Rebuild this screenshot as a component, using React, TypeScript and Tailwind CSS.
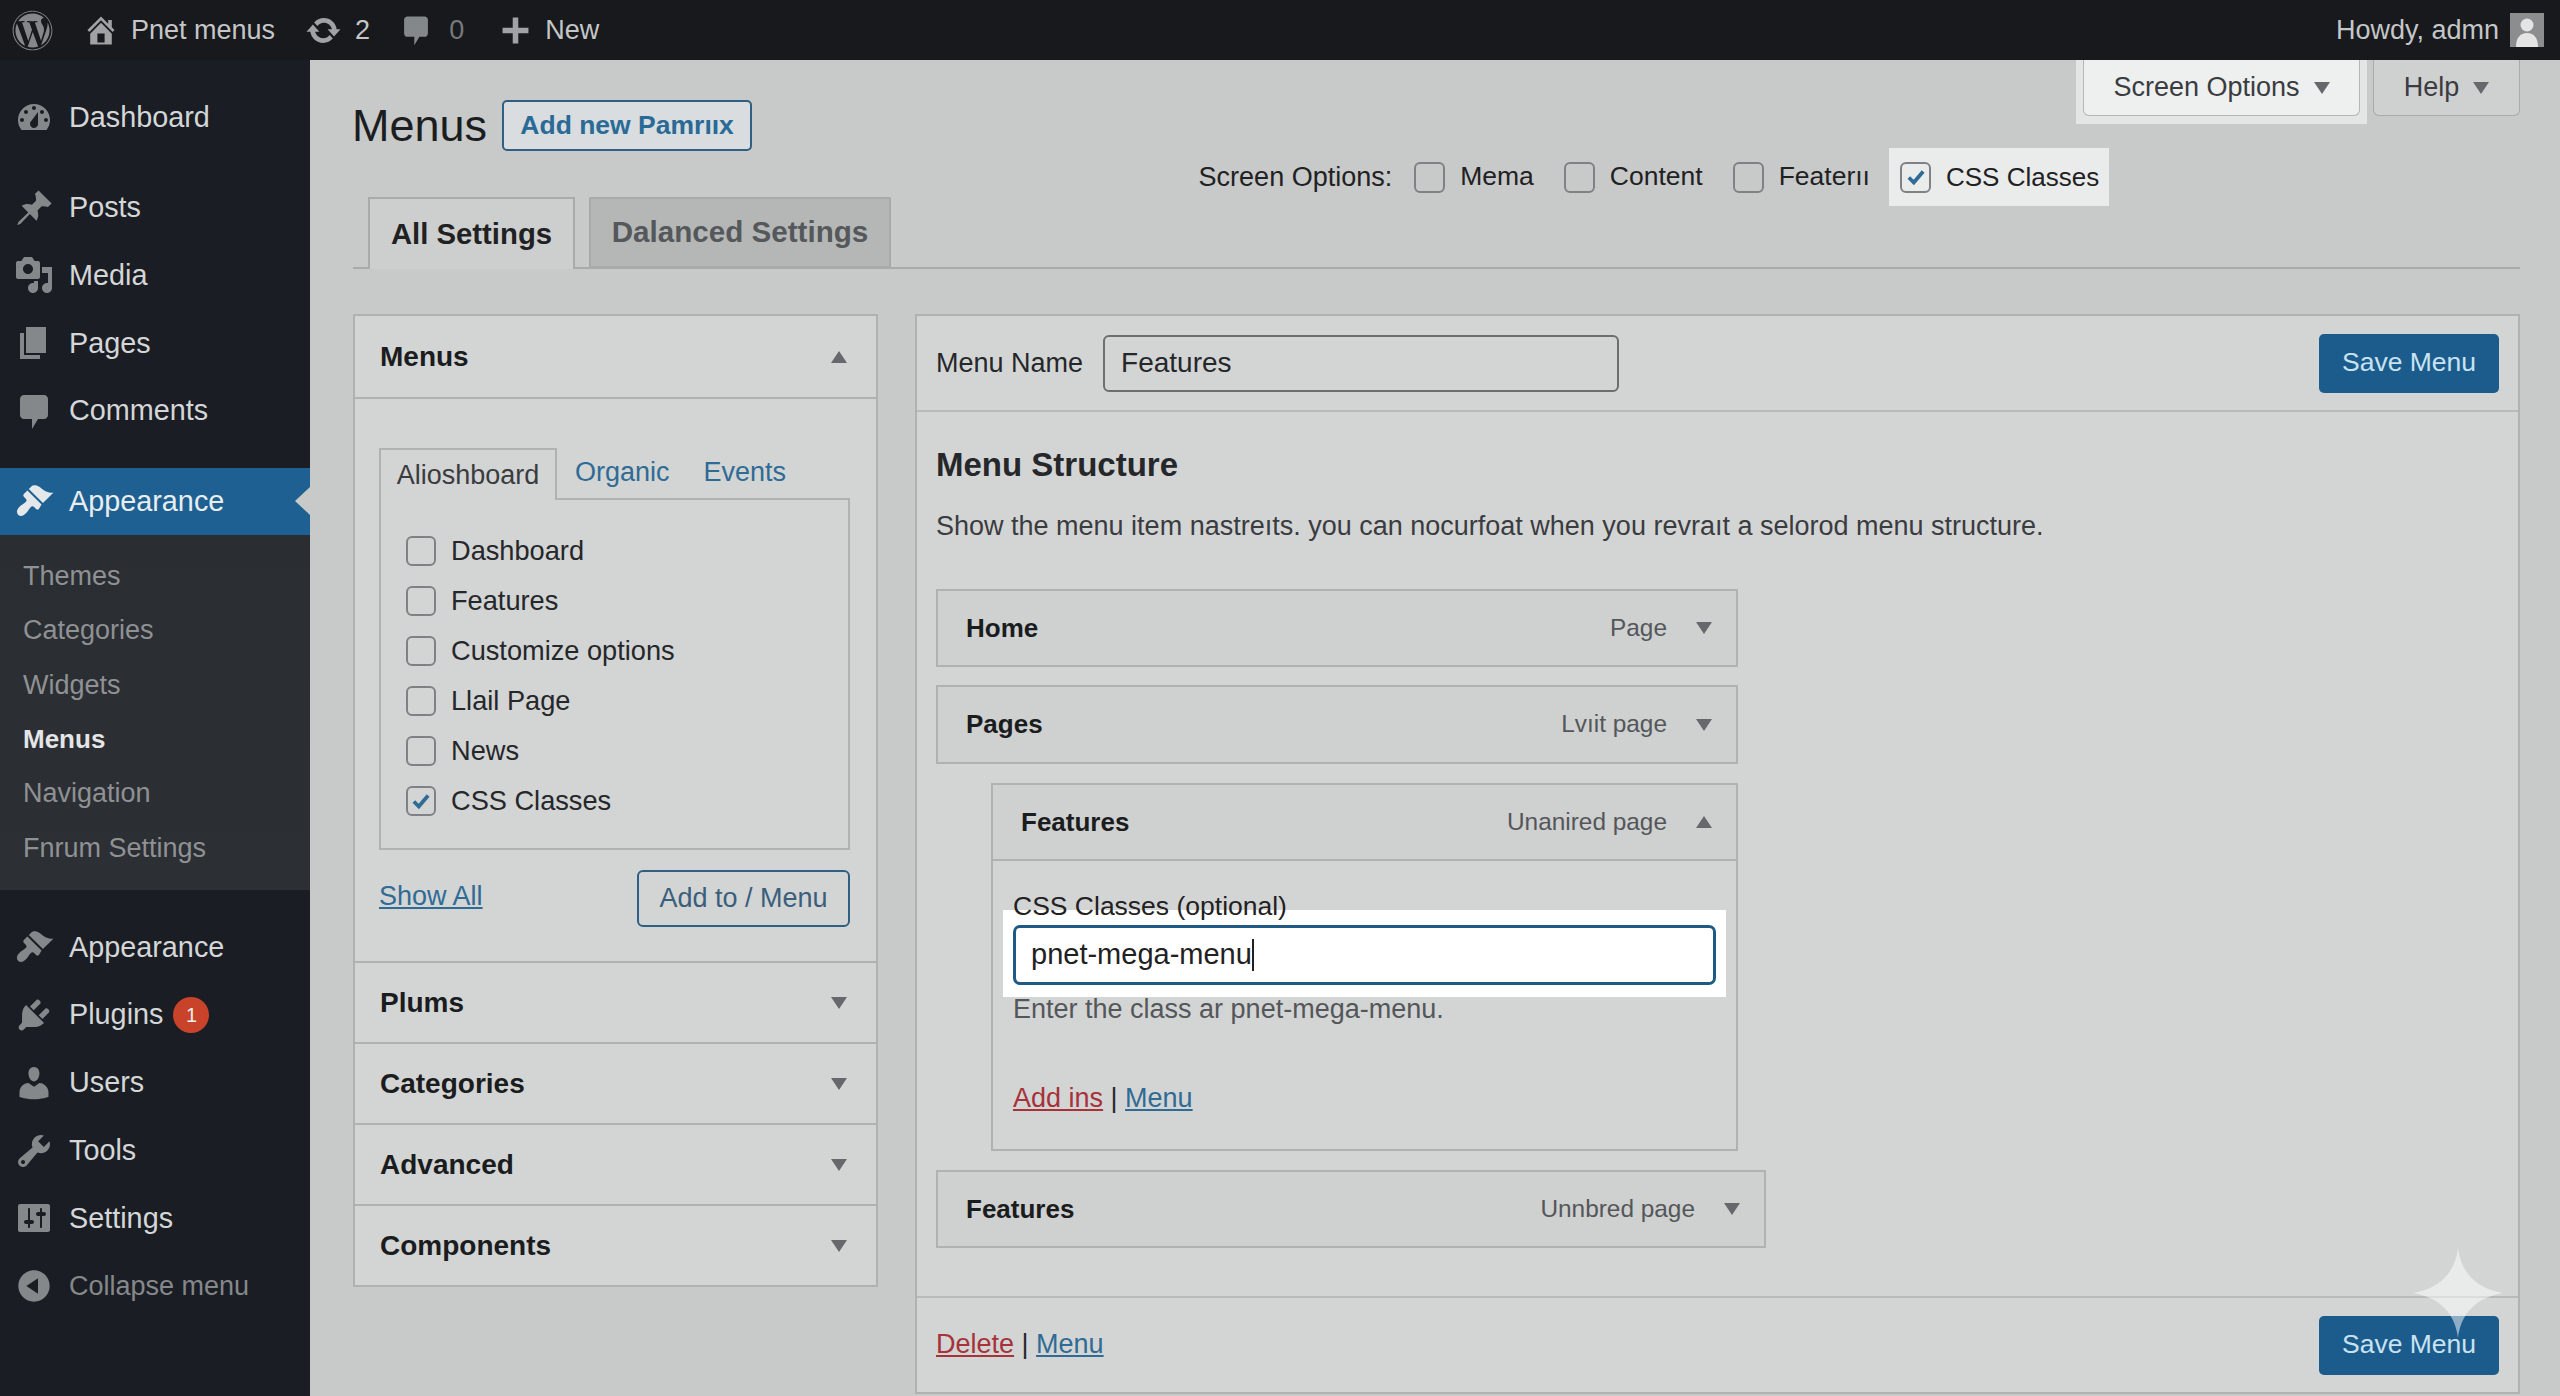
import React from 'react';
import { FaWordpress } from 'react-icons/fa';

const icons: Record<string, string> = {
  home: 'M16 8.5l1.53 1.53-1.06 1.06L10 4.62l-6.47 6.47-1.06-1.06L10 2.5l4 4v-2h2v4zm-6-2.46l6 5.99V18H4v-5.97zM12 17v-5H8v5h4z',
  update: 'M10.2 3.28c3.53 0 6.43 2.61 6.92 6h2.08l-3.5 4-3.5-4h2.32c-.45-1.97-2.21-3.45-4.32-3.45-1.45 0-2.73.71-3.54 1.78L4.95 5.66C6.23 4.2 8.11 3.28 10.2 3.28zm-.4 13.44c-3.52 0-6.43-2.61-6.92-6H.8l3.5-4c1.17 1.33 2.33 2.67 3.5 4H5.48c.45 1.97 2.21 3.45 4.32 3.45 1.45 0 2.73-.71 3.54-1.78l1.71 1.95c-1.28 1.46-3.15 2.38-5.25 2.38z',
  comment: 'M5 2h10c1.1 0 2 .9 2 2v8c0 1.1-.9 2-2 2h-3l-3 5v-5H5c-1.1 0-2-.9-2-2V4c0-1.1.9-2 2-2z',
  plus: 'M17 8.5v3h-5.5V17h-3v-5.5H3v-3h5.5V3h3v5.5z',
  dashboard: 'M3.76 16h12.48c1.1-1.37 1.76-3.11 1.76-5 0-4.42-3.58-8-8-8s-8 3.58-8 8c0 1.89.66 3.63 1.76 5zM10 4c.55 0 1 .45 1 1s-.45 1-1 1-1-.45-1-1 .45-1 1-1zM6 6c.55 0 1 .45 1 1s-.45 1-1 1-1-.45-1-1 .45-1 1-1zm8 0c.55 0 1 .45 1 1s-.45 1-1 1-1-.45-1-1 .45-1 1-1zm-5.37 5.55L12 7v6c0 1.1-.9 2-2 2s-2-.9-2-2c0-.57.24-1.08.63-1.45zM4 10c.55 0 1 .45 1 1s-.45 1-1 1-1-.45-1-1 .45-1 1-1zm12 0c.55 0 1 .45 1 1s-.45 1-1 1-1-.45-1-1 .45-1 1-1z',
  post: 'M10.44 3.02l1.82-1.82 6.54 6.54-1.82 1.82c-1.21-.4-2.34-.55-3.28-.32l-1.96 1.96c.6 1.67.5 3.6-.5 5.13l-3.3-3.3-4.8 4.95-1.47.52.52-1.47 4.94-4.8-3.3-3.3c1.53-1 3.46-1.1 5.13-.5l1.96-1.96c.23-.94.08-2.07-.32-3.28z',
  media: 'M13 11V4c0-.55-.45-1-1-1h-1.67L9 1H5L3.67 3H2c-.55 0-1 .45-1 1v7c0 .55.45 1 1 1h10c.55 0 1-.45 1-1zM7 4.5c1.38 0 2.5 1.12 2.5 2.5S8.38 9.5 7 9.5 4.5 8.38 4.5 7 5.62 4.5 7 4.5zM14 6h5v10.5c0 1.38-1.12 2.5-2.5 2.5S14 17.88 14 16.5s1.12-2.5 2.5-2.5c.17 0 .34.02.5.05V9h-3V6zm-4 8.05V13h2v3.5c0 1.38-1.12 2.5-2.5 2.5S7 17.88 7 16.5 8.12 14 9.5 14c.17 0 .34.02.5.05z',
  page: 'M6 15V2h10v13H6zm-1 1h8v2H3V5h2v11z',
  appearance: 'M14.48 11.06L7.41 3.99l1.5-1.5c.5-.56 2.3-.47 3.51.32 1.21.8 1.43 1.28 2.91 2.1 1.18.64 2.45 1.26 4.45.85zm-.71.71L6.7 4.7 4.93 6.47c-.39.39-.39 1.02 0 1.41l1.06 1.06c.39.39.39 1.03 0 1.42-.6.6-1.43 1.11-2.21 1.69-.35.26-.7.53-1.01.84-1.34 1.34-1.78 2.88-.71 3.95 1.07 1.07 2.61.63 3.95-.71.31-.31.58-.66.84-1.01.58-.78 1.09-1.61 1.69-2.21.39-.39 1.03-.39 1.42 0l1.06 1.06c.39.39 1.02.39 1.41 0z',
  plugins: 'M13.11 4.36L9.87 7.6 8 5.73l3.24-3.24c.35-.34 1.05-.2 1.56.32.52.51.66 1.21.31 1.55zm-8 1.77l.91-1.12 9.01 9.01-1.19.84c-.71.71-2.63 1.16-3.82 1.16H6.14L4.9 17.26c-.59.59-1.54.59-2.12 0-.59-.58-.59-1.53 0-2.12l1.24-1.24v-3.88c0-1.13.4-3.19 1.09-3.89zm7.26 3.97l3.24-3.24c.34-.35 1.04-.21 1.55.31.52.51.66 1.21.31 1.55l-3.24 3.25z',
  users: 'M10 9.25c-2.27 0-2.73-3.44-2.73-3.44C7 4.02 7.82 2 9.97 2c2.16 0 2.98 2.02 2.71 3.81 0 0-.41 3.44-2.68 3.44zm0 2.57L12.72 10c2.39 0 4.52 2.33 4.52 4.53v2.49s-3.65 1.13-7.24 1.13c-3.65 0-7.24-1.13-7.24-1.13v-2.49c0-2.25 1.94-4.48 4.47-4.48z',
  tools: 'M16.68 9.77c-1.34 1.34-3.3 1.67-4.95.99l-5.41 6.52c-.99.99-2.59.99-3.58 0s-.99-2.59 0-3.57l6.52-5.42c-.68-1.65-.35-3.61.99-4.95 1.28-1.28 3.12-1.62 4.72-1.06l-2.89 2.89 2.82 2.82 2.86-2.87c.53 1.58.18 3.39-1.08 4.67zM3.81 16.21c.4.39 1.04.39 1.43 0 .4-.4.4-1.04 0-1.43-.39-.4-1.03-.4-1.43 0-.39.39-.39 1.03 0 1.43z',
  settings: 'M18 16V4c0-.55-.45-1-1-1H3c-.55 0-1 .45-1 1v12c0 .55.45 1 1 1h14c.55 0 1-.45 1-1zM8 11h1c.55 0 1 .45 1 1s-.45 1-1 1H8v1.5c0 .28-.22.5-.5.5s-.5-.22-.5-.5V13H6c-.55 0-1-.45-1-1s.45-1 1-1h1V5.5c0-.28.22-.5.5-.5s.5.22.5.5V11zm5-2h-1c-.55 0-1-.45-1-1s.45-1 1-1h1V5.5c0-.28.22-.5.5-.5s.5.22.5.5V7h1c.55 0 1 .45 1 1s-.45 1-1 1h-1v5.5c0 .28-.22.5-.5.5s-.5-.22-.5-.5V9z',
  collapse: 'M10 2.16c4.33 0 7.84 3.51 7.84 7.84s-3.51 7.84-7.84 7.84S2.16 14.33 2.16 10 5.71 2.16 10 2.16zm2 11.72V6.12L6.18 9.97z',
};

function Icon({ name, className }: { name: string; className?: string }) {
  return (
    <svg viewBox="0 0 20 20" fill="currentColor" className={className}>
      <path d={icons[name]} />
    </svg>
  );
}

function Caret({ up, className }: { up?: boolean; className?: string }) {
  return (
    <svg viewBox="0 0 16 12" fill="currentColor" className={`w-[16px] h-[12px] ${className ?? 'text-[#66696b]'}`}>
      <path d={up ? 'M8 0l8 12H0z' : 'M0 0h16L8 12z'} />
    </svg>
  );
}

function Checkbox({ checked, className }: { checked?: boolean; className?: string }) {
  return (
    <span className={`flex items-center justify-center shrink-0 border-2 border-[#7f8284] rounded-[6px] ${className ?? 'w-[30px] h-[30px]'}`}>
      {checked && (
        <svg viewBox="0 0 20 20" className="w-[22px] h-[22px] text-[#2f6b94]" fill="none" stroke="currentColor" strokeWidth="3.4">
          <path d="M3.5 10.5l4.5 4.5 8.5-10" />
        </svg>
      )}
    </span>
  );
}

function SideItem({ icon, label, dim, badge }: { icon: string; label: string; dim?: boolean; badge?: string }) {
  return (
    <div className="flex items-center h-[67.8px] pl-[14px]">
      <Icon name={icon} className="w-[40px] h-[40px] text-[#85888b] shrink-0" />
      <span className={`ml-[15px] ${dim ? 'text-[#85888b] text-[27px]' : 'text-[#d4d6d8] text-[28.8px]'}`}>{label}</span>
      {badge && (
        <span className="ml-[10px] w-[36px] h-[36px] rounded-full bg-[#c8432a] text-[#eee] text-[20px] flex items-center justify-center">{badge}</span>
      )}
    </div>
  );
}

function Sidebar() {
  const subItems = ['Themes', 'Categories', 'Widgets', 'Menus', 'Navigation', 'Fnrum Settings'];
  return (
    <aside className="w-[310px] shrink-0 bg-[#1a1d23] pt-[24px]">
      <SideItem icon="dashboard" label="Dashboard" />
      <div className="mt-[22px]">
        <SideItem icon="post" label="Posts" />
        <SideItem icon="media" label="Media" />
        <SideItem icon="page" label="Pages" />
        <SideItem icon="comment" label="Comments" />
      </div>
      <div className="relative mt-[23px] h-[67px] bg-[#1e6091] flex items-center pl-[14px]">
        <Icon name="appearance" className="w-[40px] h-[40px] text-[#e4e8eb]" />
        <span className="ml-[15px] text-[28.8px] text-[#e8edf0]">Appearance</span>
        <span className="absolute right-0 top-[19px] w-0 h-0 border-y-[14px] border-y-transparent border-r-[15px] border-r-[#c8c9c9]" />
      </div>
      <div className="bg-gradient-to-b from-[#2a2d31] to-[#2c2f33] pt-[14px] pb-[15px]">
        {subItems.map((item) => (
          <div key={item} className={`h-[54.4px] flex items-center pl-[23px] ${item === 'Menus' ? 'font-bold text-[#e4e5e6] text-[26px]' : 'text-[#8f9194] text-[27px]'}`}>
            {item}
          </div>
        ))}
      </div>
      <div className="mt-[23px]">
        <SideItem icon="appearance" label="Appearance" />
        <SideItem icon="plugins" label="Plugins" badge="1" />
        <SideItem icon="users" label="Users" />
        <SideItem icon="tools" label="Tools" />
        <SideItem icon="settings" label="Settings" />
        <SideItem icon="collapse" label="Collapse menu" dim />
      </div>
    </aside>
  );
}

function TopBar() {
  return (
    <header className="h-[60px] shrink-0 bg-[#17191c] flex items-center text-[27px] text-[#c4c6c8]">
      <FaWordpress className="ml-[12px] w-[41px] h-[41px] text-[#85888b]" />
      <Icon name="home" className="ml-[30px] w-[36px] h-[36px] text-[#a0a2a4]" />
      <span className="ml-[12px]">Pnet menus</span>
      <Icon name="update" className="ml-[30px] w-[37px] h-[37px] text-[#a0a2a4]" />
      <span className="ml-[13px]">2</span>
      <Icon name="comment" className="ml-[29px] w-[34px] h-[34px] text-[#85888b]" />
      <span className="ml-[16px] text-[#77797c]">0</span>
      <Icon name="plus" className="ml-[33px] w-[37px] h-[37px] text-[#a0a2a4]" />
      <span className="ml-[11px]">New</span>
      <span className="ml-auto">Howdy, admn</span>
      <span className="ml-[11px] mr-[16px] w-[34px] h-[34px] bg-[#8b8d8f] flex items-end justify-center overflow-hidden">
        <svg viewBox="0 0 34 34" className="w-[34px] h-[34px] text-[#e4e4e4]" fill="currentColor">
          <circle cx="17" cy="12" r="6.5" />
          <path d="M6 34c0-9 4-14 11-14s11 5 11 14z" />
        </svg>
      </span>
    </header>
  );
}

function ScreenOption({ label }: { label: string }) {
  return (
    <div className="flex items-center gap-[15px]">
      <Checkbox className="w-[31px] h-[31px]" />
      <span>{label}</span>
    </div>
  );
}

function PageHeader() {
  return (
    <div className="h-[137px] flex justify-between">
      <div className="flex items-start pt-[40px]">
        <h1 className="text-[45px] leading-[50px] text-[#1b1d1f] mt-[1px] -ml-[1px]">Menus</h1>
        <button className="ml-[15px] w-[250px] h-[51px] border-2 border-[#2f5f82] rounded-[5px] bg-[#d9dddf] text-[26.5px] font-bold text-[#2a6a96] whitespace-nowrap">
          Add new Pamrııx
        </button>
      </div>
      <div className="flex flex-col items-end">
        <div className="flex items-start gap-[13px] text-[27px] text-[#3a3c3f]">
          <div className="bg-[#e4e5e5] px-[7px] pb-[8px] relative">
            <div className="w-[277px] h-[56px] bg-[#eeefef] border border-t-0 border-[#b5b6b6] rounded-b-[6px] flex items-center justify-center gap-[14px]">
              Screen Options <Caret />
            </div>
          </div>
          <div className="w-[147px] h-[56px] -ml-[7px] bg-[#cfd0d0] border border-t-0 border-[#a9aaaa] rounded-b-[6px] flex items-center justify-center gap-[14px]">
            Help <Caret />
          </div>
        </div>
        <div className="mr-[411px] -mt-[8px] pt-[32px] flex items-center text-[26.5px] text-[#1f2123]">
          <span className="mr-[22px] text-[27px]">Screen Options:</span>
          <div className="flex items-center gap-[30px]">
            <ScreenOption label="Mema" />
            <ScreenOption label="Content" />
            <ScreenOption label="Featerıı" />
          </div>
          <div className="ml-[19px] w-[220px] h-[58px] bg-[#eaebeb] flex items-center gap-[15px] pl-[11px] text-[26px]">
            <Checkbox checked className="w-[31px] h-[31px]" />
            <span>CSS Classes</span>
          </div>
        </div>
      </div>
    </div>
  );
}

function PageTabs() {
  return (
    <div className="h-[72px] border-b-2 border-[#a9aaaa] pl-[15px] flex gap-[14px] font-bold">
      <div className="w-[207px] h-[72px] bg-[#cdcece] border-2 border-b-0 border-[#a9aaaa] text-[#1f2123] flex items-center justify-center">
        <span className="text-[29.3px]">All Settings</span>
      </div>
      <div className="w-[302px] h-[71px] bg-[#b5b6b6] border-2 border-[#a9aaaa] text-[#55585b] flex items-center justify-center">
        <span className="text-[29.6px]">Dalanced Settings</span>
      </div>
    </div>
  );
}

function AccordionRow({ label }: { label: string }) {
  return (
    <div className="h-[81px] border-t-2 border-[#b0b1b1] flex items-center justify-between pl-[25px] pr-[29px]">
      <span className="text-[28px] font-bold text-[#1a1c1e]">{label}</span>
      <Caret />
    </div>
  );
}

function MenusPanel() {
  const rows = ['Dashboard', 'Features', 'Customize options', 'Llail Page', 'News', 'CSS Classes'];
  return (
    <div className="w-[525px] shrink-0 bg-[#d3d4d4] border-2 border-[#b0b1b1]">
      <div className="h-[83px] border-b-2 border-[#b0b1b1] flex items-center justify-between pl-[25px] pr-[29px]">
        <span className="text-[28px] font-bold text-[#1a1c1e]">Menus</span>
        <Caret up />
      </div>
      <div className="h-[562px] pt-[47px] pl-[24px] pr-[26px]">
        <div className="flex items-end h-[52px] text-[27px]">
          <div className="w-[178px] h-[52px] -mb-[2px] relative bg-[#d3d4d4] border-2 border-b-0 border-[#b0b1b1] flex items-center justify-center text-[#3a3c3f]">
            Alioshboard
          </div>
          <span className="ml-[18px] h-[50px] leading-[48px] text-[#2f6b94]">Organic</span>
          <span className="ml-[34px] h-[50px] leading-[48px] text-[#2f6b94]">Events</span>
        </div>
        <div className="h-[352px] border-2 border-[#b0b1b1] pt-[26px] pl-[25px]">
          {rows.map((row) => (
            <div key={row} className="h-[50px] flex items-center gap-[15px] text-[27.2px] text-[#25272a]">
              <Checkbox checked={row === 'CSS Classes'} />
              <span>{row}</span>
            </div>
          ))}
        </div>
        <div className="mt-[20px] flex items-center justify-between">
          <a className="text-[27px] text-[#2f6b94] underline -mt-[4px]">Show All</a>
          <button className="w-[213px] h-[57px] border-2 border-[#2f5f82] rounded-[6px] text-[27px] text-[#3a5f7c]">Add to / Menu</button>
        </div>
      </div>
      <AccordionRow label="Plums" />
      <AccordionRow label="Categories" />
      <AccordionRow label="Advanced" />
      <AccordionRow label="Components" />
    </div>
  );
}

function SaveButton() {
  return (
    <button className="w-[180px] h-[59px] rounded-[5px] bg-[#1b5c8c] text-[#c9e2f2] text-[26.5px] ml-auto">Save Menu</button>
  );
}

function ItemHead({ label, type, up, className }: { label: string; type: string; up?: boolean; className?: string }) {
  return (
    <div className={`flex items-center pr-[24px] ${className ?? ''}`}>
      <span className="text-[26px] font-bold text-[#1a1c1e]">{label}</span>
      <span className="ml-auto text-[24.4px] text-[#54575a]">{type}</span>
      <Caret up={up} className="ml-[29px] text-[#66696b]" />
    </div>
  );
}

function MenuEditor() {
  return (
    <div className="flex-1 h-[1080px] bg-[#d3d4d4] border-2 border-[#b0b1b1] flex flex-col">
      <div className="h-[96px] shrink-0 border-b-2 border-[#b8b9b9] flex items-center pl-[19px] pr-[19px]">
        <span className="text-[27px] text-[#25272a]">Menu Name</span>
        <div className="ml-[20px] w-[516px] h-[57px] border-2 border-[#6c6e70] rounded-[6px] flex items-center pl-[16px] text-[28px] text-[#25272a]">
          Features
        </div>
        <SaveButton />
      </div>
      <div className="flex-1 pl-[19px] pt-[33px]">
        <h2 className="text-[33px] leading-[40px] font-bold text-[#25272a]">Menu Structure</h2>
        <p className="mt-[23px] text-[27px] leading-[36px] text-[#3a3c3f]">
          Show the menu item nastreıts. you can nocurfoat when you revraıt a selorod menu structure.
        </p>
        <div className="mt-[45px] w-[802px] flex flex-col">
          <ItemHead label="Home" type="Page" className="h-[78px] bg-[#cfd0d0] border-2 border-[#b0b1b1] pl-[28px]" />
          <ItemHead label="Pages" type="Lvıit page" className="mt-[18px] h-[79px] bg-[#cfd0d0] border-2 border-[#b0b1b1] pl-[28px]" />
          <div className="mt-[19px] ml-[55px] h-[368px] border-2 border-[#b0b1b1]">
            <ItemHead label="Features" type="Unanired page" up className="h-[76px] bg-[#cfd0d0] border-b-2 border-[#b0b1b1] pl-[28px]" />
            <div className="px-[20px] pt-[30px]">
              <div className="relative z-10 text-[26.5px] leading-[30px] text-[#1f2123]">CSS Classes (optional)</div>
              <div className="-mx-[10px] -mt-[11px] bg-white px-[10px] pt-[15px] pb-[12px]">
                <div className="h-[60px] border-[3px] border-[#1f5a85] rounded-[7px] bg-white flex items-center pl-[15px] text-[29px] text-[#1f2123]">
                  pnet-mega-menu<span className="w-[2px] h-[32px] bg-[#1f2123]" />
                </div>
              </div>
              <div className="-mt-[3px] text-[27px] leading-[30px] text-[#54575a]">Enter the class ar pnet-mega-menu.</div>
              <div className="mt-[59px] text-[27px] leading-[30px] text-[#25272a]">
                <a className="text-[#a6323a] underline">Add ins</a> | <a className="text-[#2f6b94] underline">Menu</a>
              </div>
            </div>
          </div>
          <ItemHead label="Features" type="Unnbred page" className="mt-[19px] w-[830px] h-[78px] bg-[#cfd0d0] border-2 border-[#b0b1b1] pl-[28px]" />
        </div>
      </div>
      <div className="h-[96px] shrink-0 border-t-2 border-[#b8b9b9] flex items-center pl-[19px] pr-[19px]">
        <span className="text-[27px] text-[#25272a] -mt-[2px]">
          <a className="text-[#a6323a] underline">Delete</a> | <a className="text-[#2f6b94] underline">Menu</a>
        </span>
        <SaveButton />
      </div>
    </div>
  );
}

export default function App() {
  return (
    <div className="relative w-[2560px] h-[1396px] overflow-hidden flex flex-col bg-[#c8c9c9] [font-family:'Liberation_Sans',Arial,sans-serif]">
      <TopBar />
      <div className="flex flex-1 min-h-0">
        <Sidebar />
        <main className="flex-1 pl-[43px] pr-[40px]">
          <PageHeader />
          <PageTabs />
          <div className="mt-[45px] flex gap-[37px] items-start">
            <MenusPanel />
            <MenuEditor />
          </div>
        </main>
      </div>
      {/* sparkle watermark */}
      <svg viewBox="0 0 90 90" className="absolute right-[57px] bottom-[58px] w-[90px] h-[90px] text-white/50" fill="currentColor">
        <path d="M45 0C48 24 62 40 90 45 62 50 48 66 45 90 42 66 28 50 0 45 28 40 42 24 45 0z" />
      </svg>
    </div>
  );
}
